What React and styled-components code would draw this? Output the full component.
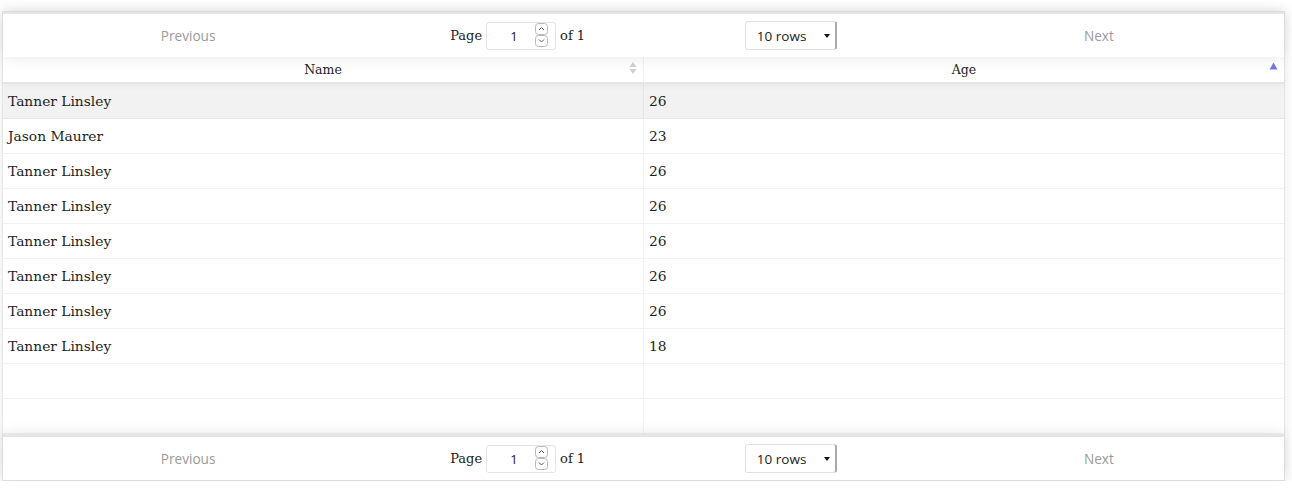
import React from 'react'
import styled, { createGlobalStyle } from 'styled-components'

const rows = [
  { name: 'Tanner Linsley', age: 26 },
  { name: 'Jason Maurer', age: 23 },
  { name: 'Tanner Linsley', age: 26 },
  { name: 'Tanner Linsley', age: 26 },
  { name: 'Tanner Linsley', age: 26 },
  { name: 'Tanner Linsley', age: 26 },
  { name: 'Tanner Linsley', age: 26 },
  { name: 'Tanner Linsley', age: 18 },
]
const pageSize = 10

const GlobalStyle = createGlobalStyle`
  body {
    margin: 0;
    background: #fff;
    font-family: "DejaVu Serif", serif;
  }
`

const Page = styled.div`
  padding: 11px 7px 0 2px;
`

const Table = styled.div`
  display: flex;
  flex-direction: column;
  border: 1px solid rgba(0, 0, 0, 0.1);
  box-shadow: 0 0 12px 0 rgba(0, 0, 0, 0.08);
  background: #fff;
`

const Pagination = styled.div`
  display: flex;
  align-items: center;
  height: ${p => p.$h}px;
  box-sizing: border-box;
  padding: 3px;
  border-top: ${p => p.$border}px solid rgba(0, 0, 0, 0.1);
  box-shadow: 0 0 15px 0 rgba(0, 0, 0, 0.1);
  position: relative;
  z-index: 2;
  background: #fff;
`

const Side = styled.div`
  flex: 1;
  display: flex;
  justify-content: center;
`

const NavButton = styled.button`
  border: 0;
  background: transparent;
  font-family: "Open Sans", sans-serif;
  font-size: 13.6px;
  color: #9a9a9a;
  padding: 6px 0;
  width: 100%;
  cursor: default;
`

const Center = styled.div`
  flex: 1.5;
  display: flex;
  align-items: center;
  justify-content: space-around;
`

const PageInfo = styled.span`
  display: flex;
  align-items: center;
  margin: 3px 10px;
  font-size: 13px;
  color: #222;
  white-space: nowrap;
`

const PageInput = styled.div`
  position: relative;
  width: 70px;
  height: 28px;
  box-sizing: border-box;
  margin: 0 4px;
  border: 1px solid rgba(0, 0, 0, 0.1);
  border-radius: 3px;
  display: flex;
  align-items: center;
  font-family: "Open Sans", sans-serif;
  font-size: 13px;
  color: #222;
`

const PageValue = styled.span`
  flex: 1;
  text-align: center;
  padding-left: 6px;
`

const Spinner = styled.svg`
  margin-right: 7px;
  flex: none;
`

const SizeSelect = styled.div`
  margin: 3px 10px;
  width: 92px;
  height: 29px;
  box-sizing: border-box;
  border: 1px solid rgba(0, 0, 0, 0.12);
  border-right: 2px solid #a9a9a9;
  border-radius: 3px;
  display: flex;
  align-items: center;
  font-family: "Open Sans", sans-serif;
  font-size: 13.5px;
  color: #222;
`

const SizeLabel = styled.span`
  flex: 1;
  padding-left: 11px;
`

const Caret = styled.span`
  width: 0;
  height: 0;
  margin-right: 5px;
  border-left: 3px solid transparent;
  border-right: 3px solid transparent;
  border-top: 4px solid #111;
`

const Header = styled.div`
  display: flex;
  height: 27px;
  box-sizing: border-box;
  border-bottom: 2px solid rgba(0, 0, 0, 0.1);
  position: relative;
  z-index: 1;
  background: #fff;
  box-shadow: 0 2px 6px 0 rgba(0, 0, 0, 0.04);
`

const HeadCell = styled.div`
  flex: 1;
  position: relative;
  display: flex;
  align-items: center;
  justify-content: center;
  font-size: 12.5px;
  color: #222;
  border-right: 1px solid rgba(0, 0, 0, 0.05);
  &:last-child {
    border-right: 0;
  }
`

const SortIcon = styled.svg`
  position: absolute;
  right: 6px;
  top: 4px;
`

const Body = styled.div`
  display: flex;
  flex-direction: column;
`

const Row = styled.div`
  display: flex;
  height: 35px;
  box-sizing: border-box;
  border-bottom: 1px solid rgba(0, 0, 0, 0.05);
  background: ${p => (p.$active ? 'rgba(0, 0, 0, 0.05)' : 'transparent')};
`

const Cell = styled.div`
  flex: 1;
  display: flex;
  align-items: center;
  padding: 0 5px;
  font-size: 13.8px;
  color: #1e1e1e;
  border-right: 1px solid rgba(0, 0, 0, 0.05);
  &:last-child {
    border-right: 0;
  }
`

const Pager = ({ h, border }) => (
  <Pagination $h={h} $border={border}>
    <Side>
      <NavButton disabled>Previous</NavButton>
    </Side>
    <Center>
      <PageInfo>
        Page
        <PageInput>
          <PageValue>1</PageValue>
          <Spinner width="13" height="25" viewBox="0 0 13 25">
            <rect x="0.5" y="0.5" width="12" height="11" rx="3" fill="#fff" stroke="#b8b8b8" />
            <rect x="0.5" y="12.5" width="12" height="11" rx="3" fill="#fff" stroke="#b8b8b8" />
            <path d="M4 7 L6.5 4.5 L9 7" fill="none" stroke="#555" strokeWidth="1" />
            <path d="M4 16.5 L6.5 19 L9 16.5" fill="none" stroke="#555" strokeWidth="1" />
          </Spinner>
        </PageInput>
        of 1
      </PageInfo>
      <SizeSelect>
        <SizeLabel>10 rows</SizeLabel>
        <Caret />
      </SizeSelect>
    </Center>
    <Side>
      <NavButton disabled>Next</NavButton>
    </Side>
  </Pagination>
)

const App = () => {
  const padRows = Array.from({ length: pageSize - rows.length })
  return (
    <Page>
      <GlobalStyle />
      <Table>
        <Pager h={45} border={2} />
        <Header>
          <HeadCell>
            Name
            <SortIcon width="8" height="14" viewBox="0 0 8 14">
              <path d="M4 1 L7.5 6 L0.5 6 Z" fill="#cfcfcf" />
              <path d="M4 13 L7.5 8 L0.5 8 Z" fill="#cfcfcf" />
            </SortIcon>
          </HeadCell>
          <HeadCell>
            Age
            <SortIcon width="9" height="8" viewBox="0 0 9 8" style={{ top: 5 }}>
              <path d="M4.5 0.5 L8.5 7.5 L0.5 7.5 Z" fill="#7777dd" />
            </SortIcon>
          </HeadCell>
        </Header>
        <Body>
          {rows.map((r, i) => (
            <Row key={i} $active={i === 0}>
              <Cell>{r.name}</Cell>
              <Cell>{r.age}</Cell>
            </Row>
          ))}
          {padRows.map((_, i) => (
            <Row key={'pad' + i}>
              <Cell>&nbsp;</Cell>
              <Cell>&nbsp;</Cell>
            </Row>
          ))}
        </Body>
        <Pager h={46} border={3} />
      </Table>
    </Page>
  )
}

export default App
